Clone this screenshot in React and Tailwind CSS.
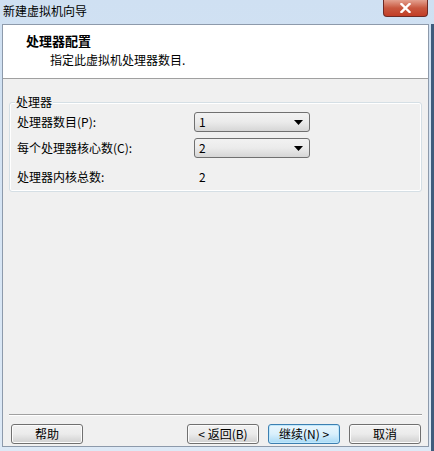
import React from 'react';

const FONT = { fontFamily: '"Noto Sans CJK SC", "Noto Sans", sans-serif' };

function Select({ value }) {
  return (
    <div className="flex h-[20px] w-[116px] items-center justify-between rounded-[3px] border border-[#707070] bg-gradient-to-b from-[#f2f2f2] via-[#ebebeb] to-[#d6d6d6] pl-[4px] pr-[6px] text-[12px] text-black">
      <span>{value}</span>
      <svg width="9" height="5" viewBox="0 0 9 5">
        <path d="M0 0h9L4.5 5z" fill="#000" />
      </svg>
    </div>
  );
}

function Button({ children, focused }) {
  return (
    <div
      className={
        'flex h-[20px] w-[72px] items-center justify-center rounded-[3px] border bg-gradient-to-b text-[12px] text-black ' +
        (focused
          ? 'border-[#3c7fb1] from-[#eaf6fd] via-[#d9f0fc] to-[#a7d9f5] shadow-[inset_0_0_0_1px_#c0e8fc]'
          : 'border-[#707070] from-[#f2f2f2] via-[#ebebeb] to-[#cfcfcf] shadow-[inset_0_0_0_1px_#fcfcfc]')
      }
    >
      {children}
    </div>
  );
}

export default function App() {
  return (
    <div className="flex h-[451px] w-[434px] flex-col overflow-hidden bg-gradient-to-b from-[#cfe0f2] to-[#dde9f6]" style={FONT}>
      {/* Title bar */}
      <div className="flex h-[24px] items-start justify-between">
        <span className="pl-[3px] pt-[3px] text-[12px] leading-[16px] text-black">新建虚拟机向导</span>
        <div className="mr-[6px] flex h-[17px] w-[45px] items-center justify-center rounded-b-[4px] border border-t-0 border-[#6d2a25] bg-gradient-to-b from-[#e3a08f] via-[#c8573f] to-[#c23d26]">
          <svg width="11" height="10" viewBox="0 0 11 10">
            <path d="M1.5 1l8 8M9.5 1l-8 8" stroke="#fff" strokeWidth="2.4" strokeLinecap="square" />
          </svg>
        </div>
      </div>

      <div className="flex flex-1">
        {/* Client area */}
        <div className="mb-[4px] ml-[2px] flex w-[427px] flex-col border border-[#8d9aab] bg-[#f0f0f0]">
          {/* Header */}
          <div className="h-[54px] border-b border-[#a0a0a0] bg-white pl-[23px] pt-[7px]">
            <div className="text-[13px] font-bold leading-[17px] text-black">处理器配置</div>
            <div className="pl-[24px] pt-[2px] text-[12px] leading-[17px] text-black">指定此虚拟机处理器数目.</div>
          </div>

          {/* Body */}
          <div className="flex flex-1 flex-col px-[6px] pt-[23px]">
            <div className="relative h-[90px] rounded-[3px] border border-[#d5dfe5] shadow-[inset_0_0_0_1px_#fff]">
              <span className="absolute left-[5px] top-[-9px] bg-[#f0f0f0] px-[1px] text-[12px] leading-[16px] text-black">处理器</span>
              <div className="flex flex-col gap-[6px] pl-[7px] pt-[9px] text-[12px] text-black">
                <div className="flex items-center">
                  <span className="w-[177px]">处理器数目(P):</span>
                  <Select value="1" />
                </div>
                <div className="flex items-center">
                  <span className="w-[177px]">每个处理器核心数(C):</span>
                  <Select value="2" />
                </div>
                <div className="flex items-center pt-[4px]">
                  <span className="w-[182px]">处理器内核总数:</span>
                  <span>2</span>
                </div>
              </div>
            </div>

            <div className="flex-1" />
            <div className="border-b border-t border-[#a0a0a0] border-b-white" />
            <div className="flex items-center pb-[2px] pt-[8px]">
              <div className="ml-[2px]">
                <Button>帮助</Button>
              </div>
              <div className="ml-auto flex gap-[9px] pr-[1px]">
                <Button>&lt; 返回(B)</Button>
                <Button focused>继续(N) &gt;</Button>
                <Button>取消</Button>
              </div>
            </div>
          </div>
        </div>
        {/* Right frame */}
        <div className="flex flex-1 justify-end">
          <div className="w-[3px] bg-[#3f5c7c]" />
        </div>
      </div>
    </div>
  );
}
